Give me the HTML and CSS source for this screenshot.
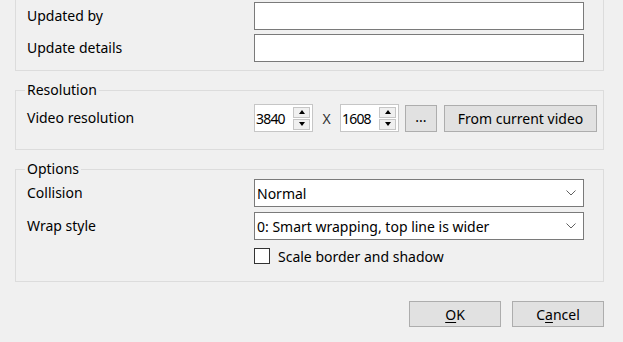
FILE: index.html
```html
<!DOCTYPE html>
<html>
<head>
<meta charset="utf-8">
<link rel="stylesheet" href="styles.css">
</head>
<body>
<div class="dialog">
  <fieldset class="group group-top">
    <div class="rows rows-edit">
      <div class="row"><span class="label">Updated by</span><div class="edit"></div></div>
      <div class="row"><span class="label">Update details</span><div class="edit"></div></div>
    </div>
  </fieldset>

  <fieldset class="group group-res">
    <legend>Resolution</legend>
    <div class="rows">
      <div class="row">
        <span class="label">Video resolution</span>
        <div class="res">
          <div class="spin"><span class="spin-val">3840</span><div class="spin-btns"><span class="sb up"></span><span class="sb down"></span></div></div>
          <span class="x">X</span>
          <div class="spin"><span class="spin-val">1608</span><div class="spin-btns"><span class="sb up"></span><span class="sb down"></span></div></div>
          <div class="btn btn-dots">...</div>
          <div class="btn btn-from">From current video</div>
        </div>
      </div>
    </div>
  </fieldset>

  <fieldset class="group group-opt">
    <legend>Options</legend>
    <div class="rows">
      <div class="row"><span class="label">Collision</span><div class="combo"><span>Normal</span><svg class="chev" width="10" height="6" viewBox="0 0 10 6"><path d="M0.5 0.5 L5 5 L9.5 0.5" fill="none" stroke="#606060" stroke-width="1"/></svg></div></div>
      <div class="row"><span class="label">Wrap style</span><div class="combo"><span>0: Smart wrapping, top line is wider</span><svg class="chev" width="10" height="6" viewBox="0 0 10 6"><path d="M0.5 0.5 L5 5 L9.5 0.5" fill="none" stroke="#606060" stroke-width="1"/></svg></div></div>
      <div class="row row-check"><span class="label"></span><div class="check"><span class="box"></span><span>Scale border and shadow</span></div></div>
    </div>
  </fieldset>

  <div class="actions">
    <div class="btn btn-dlg"><span><u>O</u>K</span></div>
    <div class="btn btn-dlg"><span>C<u>a</u>ncel</span></div>
  </div>
</div>
</body>
</html>
```

FILE: styles.css
```css
html, body {
  margin: 0;
  padding: 0;
  background: #f0f0f0;
}
body {
  font-family: "Noto Sans", "Open Sans", sans-serif;
  font-size: 14px;
  color: #000;
  width: 623px;
  height: 342px;
  overflow: hidden;
}
.dialog {
  display: flex;
  flex-direction: column;
  padding: 0 19px 0 15px;
}
.group {
  margin: 0;
  border: 1px solid #dcdcdc;
  padding: 0 19px 0 9px;
  min-width: 0;
}
.group legend {
  padding: 0 2px;
  line-height: 16px;
  height: 16px;
}
.group-top {
  margin-top: -10px;
  padding-top: 11px;
  padding-bottom: 8px;
}
.group-res {
  margin-top: 11px;
  padding-top: 6px;
  padding-bottom: 17px;
}
.group-opt {
  margin-top: 11px;
  padding-top: 2px;
  padding-bottom: 17px;
}
.rows {
  display: flex;
  flex-direction: column;
  gap: 5px;
  padding-left: 2px;
}
.rows-edit {
  gap: 4px;
}
.row {
  display: grid;
  grid-template-columns: 227px 1fr;
  align-items: center;
}
.label {
  line-height: 16px;
}
.edit {
  height: 28px;
  box-sizing: border-box;
  border: 1px solid #7a7a7a;
  background: #fff;
}
.res {
  display: flex;
  align-items: center;
}
.spin {
  display: flex;
  align-items: center;
  width: 59px;
  height: 28px;
  box-sizing: border-box;
  border: 1px solid #c6c6c6;
  background: #fff;
  padding: 0 2px 0 1px;
}
.spin-val {
  flex: 1;
  letter-spacing: -0.8px;
  font-size: 14px;
}
.spin-btns {
  display: flex;
  flex-direction: column;
  gap: 1px;
}
.sb {
  width: 17px;
  height: 11px;
  box-sizing: border-box;
  border: 1px solid #c6c6c6;
  background: #f0f0f0;
  display: flex;
  align-items: center;
  justify-content: center;
}
.sb::after {
  content: "";
  width: 0;
  height: 0;
  border-left: 3.5px solid transparent;
  border-right: 3.5px solid transparent;
}
.sb.up::after {
  border-bottom: 4px solid #000;
}
.sb.down::after {
  border-top: 4px solid #000;
}
.x {
  width: 27px;
  text-align: center;
  color: #333;
}
.btn {
  display: flex;
  align-items: center;
  justify-content: center;
  box-sizing: border-box;
  border: 1px solid #adadad;
  background: #e1e1e1;
}
.btn-dots {
  width: 32px;
  height: 27px;
  margin-left: 6px;
  padding-bottom: 4px;
}
.btn-from {
  width: 153px;
  height: 27px;
  margin-left: 7px;
}
.combo {
  height: 28px;
  box-sizing: border-box;
  border: 1px solid #7a7a7a;
  background: #fff;
  display: flex;
  align-items: center;
  justify-content: space-between;
  padding: 0 7px 0 2px;
}
.chev {
  display: block;
}
.row-check {
  margin-top: 3px;
}
.row-check .label {
  height: 16px;
}
.check {
  display: flex;
  align-items: center;
  gap: 8px;
  height: 16px;
}
.box {
  width: 16px;
  height: 16px;
  box-sizing: border-box;
  border: 1px solid #333;
  background: #fff;
}
.actions {
  display: flex;
  justify-content: flex-end;
  gap: 11px;
  margin-top: 19px;
}
.btn-dlg {
  width: 92px;
  height: 26px;
}
.btn-dlg u {
  text-underline-offset: 2px;
}
```
